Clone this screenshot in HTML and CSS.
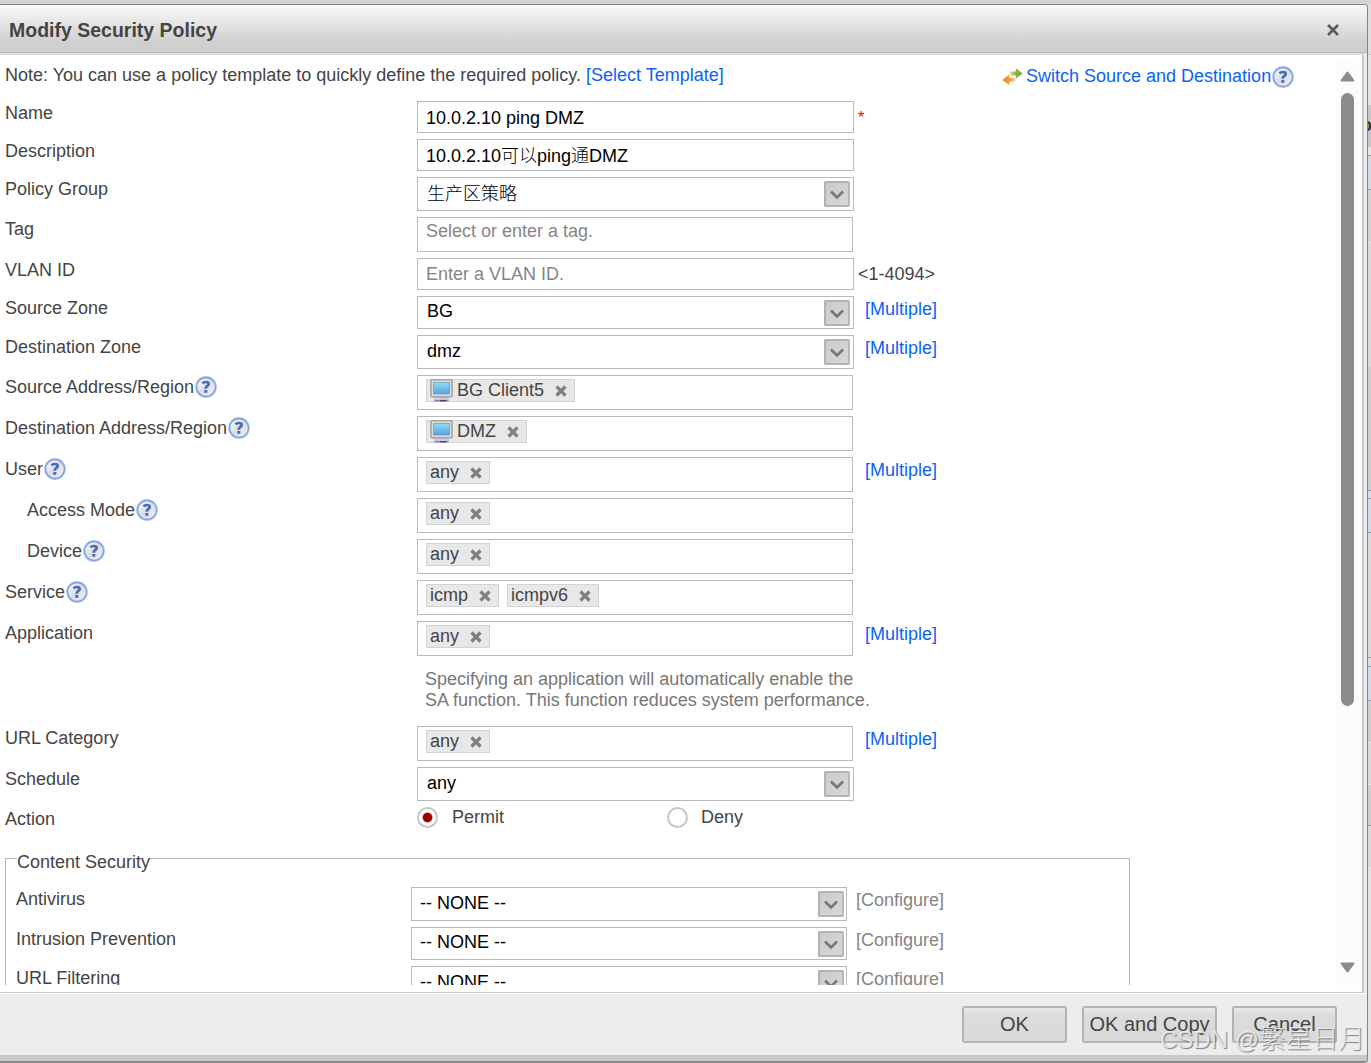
FILE: index.html
```html
<!DOCTYPE html>
<html lang="en">
<head>
<meta charset="utf-8">
<title>Modify Security Policy</title>
<link rel="stylesheet" href="styles.css">
</head>
<body>
<svg class="defs" aria-hidden="true">
  <defs>
    <linearGradient id="ballFill" x1="0" y1="0" x2="1" y2="1"><stop offset="0" stop-color="#ffffff"/><stop offset=".5" stop-color="#dcdde4"/><stop offset="1" stop-color="#f6f6fa"/></linearGradient>
    <linearGradient id="screenFill" x1="0" y1="0" x2="0" y2="1"><stop offset="0" stop-color="#8fdcf6"/><stop offset="1" stop-color="#5c9fdc"/></linearGradient>
    <linearGradient id="greenFill" x1="0" y1="0" x2="1" y2="0"><stop offset="0" stop-color="#d5e0b4"/><stop offset=".5" stop-color="#8db33c"/><stop offset="1" stop-color="#7da62c"/></linearGradient>
    <linearGradient id="orangeFill" x1="0" y1="0" x2="1" y2="0"><stop offset="0" stop-color="#e88a1c"/><stop offset=".6" stop-color="#f0a03c"/><stop offset="1" stop-color="#fbd9a8"/></linearGradient>
  </defs>
  <symbol id="help" viewBox="0 0 22 22">
    <circle cx="11" cy="11" r="9.9" fill="url(#ballFill)" stroke="#b5cbf3" stroke-width="2"/>
    <circle cx="11" cy="11" r="9.5" fill="none" stroke="#7f9fe0" stroke-width="1.3"/>
    <path d="M7.400 7.200C8.500 6.200 9.500 6 10.800 6c1.900 0 2.900.8 2.900 2.100 0 1.900-3 1.900-3 4.600" fill="none" stroke="#4a6cb0" stroke-width="2.700"/>
    <rect x="9.300" y="14" width="3" height="2.800" fill="#4a6cb0"/>
  </symbol>
  <symbol id="remove" viewBox="0 0 12 12">
    <path d="M1.500 1.500l9 9M10.500 1.500l-9 9" fill="none" stroke="#808080" stroke-width="3.200"/>
  </symbol>
  <symbol id="screen" viewBox="0 0 23 23">
    <rect x="4" y="17" width="15" height="5.500" fill="#c9c7e4"/>
    <path d="M4.500 21.700h14" stroke="#8683ae" stroke-width="1.400"/>
    <path d="M10 21.700h6" stroke="#4b4868" stroke-width="1.400"/>
    <rect x="1" y=".8" width="21" height="17" rx="1" fill="#dedede" stroke="#a3a3a3" stroke-width="1.600"/>
    <rect x="3.600" y="3.600" width="15.800" height="11.400" fill="url(#screenFill)" stroke="#669fd0" stroke-width=".8"/>
  </symbol>
  <symbol id="down" viewBox="0 0 22 22">
    <path d="M5 8.500l6 6 6-6" fill="none" stroke="#77777b" stroke-width="2.600"/>
  </symbol>
</svg>

<div class="page">
  <div class="dialog">
    <div class="dialog-head">
      <h1>Modify Security Policy</h1>
      <svg class="close" viewBox="0 0 14 14"><path d="M2 2l10 10M12 2L2 12" fill="none" stroke="#5c5c5c" stroke-width="2.600"/></svg>
    </div>

    <div class="dialog-body">
      <div class="content">
        <div class="note">
          <span class="note-text">Note: You can use a policy template to quickly define the required policy. <a>[Select Template]</a></span>
          <span class="switch">
            <svg class="swap" viewBox="0 0 21 17"><path d="M8 3.600h5.800V.2L20.500 5.500l-6.700 5.200V7.600H8z" fill="url(#greenFill)"/><path d="M13.500 9.800H7.200V6.500L.3 12l6.900 5v-3.200h6.300z" fill="url(#orangeFill)"/></svg>
            <a>Switch Source and Destination</a><svg class="help"><use href="#help"/></svg>
          </span>
        </div>

        <div class="form">
          <div class="row"><label>Name</label><div class="input">10.0.2.10 ping DMZ</div><span class="required">*</span></div>
          <div class="row"><label>Description</label><div class="input">10.0.2.10<span class="cjk">可以</span>ping<span class="cjk">通</span>DMZ</div></div>
          <div class="row"><label>Policy Group</label><div class="select"><span class="cjk">生产区策略</span><svg class="drop"><use href="#down"/></svg></div></div>
          <div class="row"><label>Tag</label><div class="tags hint">Select or enter a tag.</div></div>
          <div class="row"><label>VLAN ID</label><div class="input hint">Enter a VLAN ID.</div><span class="range">&lt;1-4094&gt;</span></div>
          <div class="row"><label>Source Zone</label><div class="select short">BG<svg class="drop"><use href="#down"/></svg></div><a class="more">[Multiple]</a></div>
          <div class="row"><label>Destination Zone</label><div class="select">dmz<svg class="drop"><use href="#down"/></svg></div><a class="more">[Multiple]</a></div>
          <div class="row"><label>Source Address/Region<svg class="help"><use href="#help"/></svg></label><div class="tags"><span class="chip"><svg class="pc"><use href="#screen"/></svg>BG Client5<svg class="x"><use href="#remove"/></svg></span></div></div>
          <div class="row"><label>Destination Address/Region<svg class="help"><use href="#help"/></svg></label><div class="tags"><span class="chip"><svg class="pc"><use href="#screen"/></svg>DMZ<svg class="x"><use href="#remove"/></svg></span></div></div>
          <div class="row"><label>User<svg class="help"><use href="#help"/></svg></label><div class="tags"><span class="chip">any<svg class="x"><use href="#remove"/></svg></span></div><a class="more">[Multiple]</a></div>
          <div class="row"><label class="sub">Access Mode<svg class="help"><use href="#help"/></svg></label><div class="tags"><span class="chip">any<svg class="x"><use href="#remove"/></svg></span></div></div>
          <div class="row"><label class="sub">Device<svg class="help"><use href="#help"/></svg></label><div class="tags"><span class="chip">any<svg class="x"><use href="#remove"/></svg></span></div></div>
          <div class="row"><label>Service<svg class="help"><use href="#help"/></svg></label><div class="tags"><span class="chip">icmp<svg class="x"><use href="#remove"/></svg></span><span class="chip">icmpv6<svg class="x"><use href="#remove"/></svg></span></div></div>
          <div class="row"><label>Application</label><div class="tags"><span class="chip">any<svg class="x"><use href="#remove"/></svg></span></div><a class="more">[Multiple]</a></div>
          <div class="tip">Specifying an application will automatically enable the<br>SA function. This function reduces system performance.</div>
          <div class="row"><label>URL Category</label><div class="tags"><span class="chip">any<svg class="x"><use href="#remove"/></svg></span></div><a class="more">[Multiple]</a></div>
          <div class="row"><label>Schedule</label><div class="select">any<svg class="drop"><use href="#down"/></svg></div></div>
          <div class="row"><label>Action</label><div class="radios"><span class="choice"><i class="radio on"></i>Permit</span><span class="choice"><i class="radio"></i>Deny</span></div></div>
        </div>

        <div class="group">
          <div class="legend">Content Security</div>
          <div class="form">
            <div class="row"><label>Antivirus</label><div class="select">-- NONE --<svg class="drop"><use href="#down"/></svg></div><span class="more off">[Configure]</span></div>
            <div class="row"><label>Intrusion Prevention</label><div class="select short">-- NONE --<svg class="drop"><use href="#down"/></svg></div><span class="more off">[Configure]</span></div>
            <div class="row"><label>URL Filtering</label><div class="select">-- NONE --<svg class="drop"><use href="#down"/></svg></div><span class="more off">[Configure]</span></div>
            <div class="row"></div>
          </div>
        </div>
      </div>

      <div class="scrollbar">
        <svg class="arrow" viewBox="0 0 15 11"><path d="M7.500 1.500L13.500 9.500h-12z" fill="#8b8b8b" stroke="#8b8b8b" stroke-width="2" stroke-linejoin="round"/></svg>
        <div class="thumb"></div>
        <svg class="arrow end" viewBox="0 0 15 11"><path d="M7.500 9.500L13.500 1.500h-12z" fill="#8b8b8b" stroke="#8b8b8b" stroke-width="2" stroke-linejoin="round"/></svg>
      </div>
    </div>

    <div class="dialog-foot">
      <div class="button">OK</div>
      <div class="button wide">OK and Copy</div>
      <div class="button">Cancel</div>
    </div>
  </div>

  <div class="behind">
    <i class="b-top"></i><i class="b-bar"></i><i class="b-gap"></i><i class="b-head">o</i><i class="b-space"></i><i class="b-sel"></i><i class="b-row1"></i><i class="b-row2"></i><i class="b-row3"></i><i class="b-line"></i><i class="b-sel"></i><i class="b-row4"></i><i class="b-line2"></i><i class="b-sel"></i><i class="b-row5"></i><i class="b-row6"></i><i class="b-row7"></i><i class="b-row8"></i>
  </div>
</div>
<div class="watermark">CSDN @<span>繁星日月</span></div>
</body>
</html>
```

FILE: styles.css
```css
* { box-sizing: border-box; }
body {
  margin: 0;
  width: 1371px;
  height: 1063px;
  overflow: hidden;
  position: relative;
  background: #d4d4d4;
  color: #444;
  font: 18px/20px "Liberation Sans", "Noto Sans CJK SC", sans-serif;
}
a { color: #0a62fa; }
svg { display: block; flex: none; }
.defs { position: absolute; width: 0; height: 0; }
.cjk { font-family: "Noto Sans CJK SC", sans-serif; font-weight: 300; line-height: 18px; }

.page { display: flex; height: 1063px; }
.dialog {
  display: flex;
  flex-direction: column;
  width: 1368px;
  height: 1059px;
  margin-top: 4px;
  background: #ededed;
  border-top: 1px solid #858585;
  border-right: 1px solid #858585;
  border-bottom: 2px solid #8b8b8b;
  border-radius: 0 4px 4px 0;
  overflow: hidden;
}
.dialog-head {
  display: flex;
  justify-content: space-between;
  align-items: center;
  height: 48px;
  padding: 3px 27px 0 9px;
  background: linear-gradient(#fafafa, #cfcfcf 80%, #cfcfcf);
  border-bottom: 1px solid #bcbcbc;
}
.dialog-head h1 { margin: 0; font-size: 19.5px; line-height: 24px; }
.close { width: 14px; height: 14px; margin-top: -1px; }

.dialog-body {
  display: flex;
  width: 1364px;
  height: 940px;
  background: #fff;
  border-top: 2px solid #dedede;
  border-right: 2px solid #c9c9c9;
  border-bottom: 1px solid #c9c9c9;
}
.content { width: 1336px; height: 930px; padding-left: 5px; overflow: hidden; }
.note { display: flex; height: 46px; }
.note-text { width: 997px; padding-top: 10px; white-space: nowrap; }
.switch { display: flex; padding-top: 11px; white-space: nowrap; }
.swap { width: 21px; height: 17px; margin: 2px 3px 0 0; }
.help { width: 22px; height: 22px; margin: -1px 0; }
.switch .help { margin-top: 0; margin-left: 1px; }

.form { display: flex; flex-direction: column; gap: 6px; }
.row { display: flex; align-items: flex-start; }
.row label { display: flex; width: 412px; padding-top: 2px; white-space: nowrap; }
.row label.sub { padding-left: 22px; }
.row label .help { margin-left: 1px; }
.input, .select, .tags { width: 437px; border: 1px solid #b8b8bf; background: #fff; }
.input { height: 32px; padding: 6px 8px; color: #000; }
.input .cjk { line-height: 14px; }
.select { display: flex; justify-content: space-between; height: 34px; padding: 5px 3px 0 9px; color: #000; }
.select.short { height: 33px; padding-top: 4px; }
.drop {
  width: 26px;
  height: 26px;
  margin-top: -2px;
  border: 2px solid #b2b2b6;
  border-right-color: #b9b9bd;
  background: linear-gradient(135deg, #cbcbce, #d8d8d9);
  border-radius: 2px;
}
.select.short .drop { margin-top: -1px; }
.tags { display: flex; gap: 8px; width: 436px; height: 35px; padding: 3px 8px; }
.hint { color: #858585; }
.input.hint { padding-top: 5px; }
.chip {
  display: flex;
  height: 23px;
  padding: 0 7px 0 3px;
  border: 1px solid #d3d3d3;
  background: #e8e8e8;
  white-space: nowrap;
}
.chip .x { width: 12px; height: 12px; margin: 5px 0 0 11px; }
.chip .pc { width: 23px; height: 23px; margin: -1px 4px 0 0; }
.required { margin-left: 4px; padding-top: 7px; color: #f00; font-size: 16px; }
.range { margin-left: 4px; padding-top: 6px; }
.more { margin-left: 12px; padding-top: 3px; }
.select + .more { margin-left: 11px; }
.select + .off { margin-left: 9px; color: #858585; }
.tip { height: 58px; padding: 7px 0 0 420px; color: #777; line-height: 21px; }
.radios { display: flex; height: 21px; }
.choice { display: flex; width: 250px; }
.radio {
  width: 21px;
  height: 21px;
  margin-right: 14px;
  border: 2px solid #c6c6c6;
  border-radius: 50%;
  background: #fff;
}
.choice + .choice .radio { margin-right: 13px; }
.radio.on { background: radial-gradient(circle, #990000 4.200px, #fff 5.500px); }

.group { width: 1125px; margin-top: 29px; padding-left: 11px; border: 1px solid #b4b4c0; border-bottom: 0; }
.legend { width: 133px; height: 20px; margin: -7px 0 15px; background: #fff; white-space: nowrap; }
.group .row label { width: 395px; margin-left: -1px; }
.group .select { width: 436px; padding-left: 8px; padding-right: 2px; }

.scrollbar { width: 23px; height: 927px; margin-top: 3px; padding: 13px 4px 12px; background: #fcfcfc; display: flex; flex-direction: column; }
.arrow { width: 15px; height: 11px; }
.thumb { width: 13px; height: 613px; margin: 11px 0 0 1px; border-radius: 7px; background: #8b8b8b; }
.arrow.end { margin-top: auto; }

.dialog-foot {
  display: flex;
  gap: 15px;
  height: 68px;
  padding: 12px 0 0 962px;
  border-top: 1px solid #fff;
  background: linear-gradient(#ededed 61px, #c8c8c8 61px);
}
.button {
  width: 105px;
  height: 37px;
  border: 2px solid #b2b2b7;
  border-radius: 3px;
  background: linear-gradient(#eaeaea, #dcdcdc 20%, #d9d9d9);
  font-size: 20px;
  line-height: 32px;
  text-align: center;
  white-space: nowrap;
}
.button.wide { width: 135px; }

.behind { display: flex; flex-direction: column; width: 3px; height: 1063px; overflow: hidden; background: #e4e4e4; }
.behind i { flex: none; display: block; width: 3px; }
.b-top { height: 4px; background: #d4d4d4; }
.b-bar { height: 51px; background: #dedede; border-bottom: 1px solid #c8c8c8; }
.b-gap { height: 50px; background: #e4e4e4; }
.b-head { height: 42px; background: #c8c8c8; font: bold 18px/40px "Liberation Sans", sans-serif; color: #333; overflow: hidden; text-indent: -7px; }
.b-space { height: 8px; background: #e6e6e6; }
.b-sel { height: 35px; background: #d3d9e7; border: solid #79a1d9; border-width: 1px 0; }
.b-row1 { height: 53px; background: #d3d3d3; border-bottom: 1px solid #e6e6e6; }
.b-row2 { height: 124px; background: #d9d9d9; }
.b-row3 { height: 123px; background: #cfcfcf; }
.b-line { height: 8px; background: #ddd; border-top: 1px solid #79a1d9; }
.b-row4 { height: 124px; background: #dadada; }
.b-line2 { height: 9px; background: #ddd; border-top: 1px solid #79a1d9; }
.b-row5 { height: 42px; background: #cfcfcf; border-bottom: 1px solid #e6e6e6; }
.b-row6 { height: 42px; background: #d9d9d9; border-bottom: 1px solid #e6e6e6; }
.b-row7 { height: 41px; background: #cfcfcf; border-bottom: 1px solid #79a1d9; }
.b-row8 { height: 41px; background: #d9d9d9; }

.watermark {
  position: absolute;
  left: 1160px;
  top: 1023px;
  font: 300 24px/32px "Liberation Sans", "Noto Sans CJK SC", sans-serif;
  color: rgba(240, 240, 240, .85);
  text-shadow: 1px 1px 1px rgba(90, 90, 90, .75);
  white-space: nowrap;
}
.watermark span { font-size: 26.5px; }
```
